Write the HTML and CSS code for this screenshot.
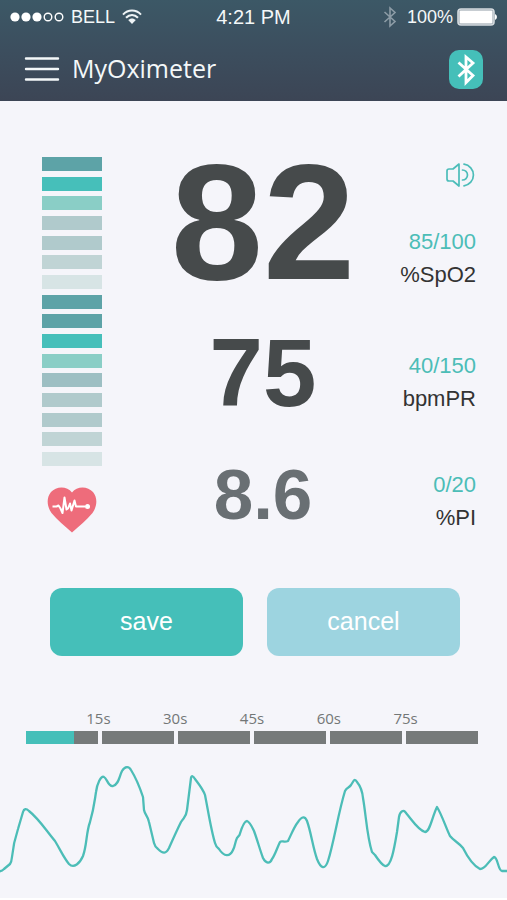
FILE: index.html
```
<!DOCTYPE html>
<html lang="en">
<head>
<meta charset="utf-8">
<meta name="viewport" content="width=device-width, initial-scale=1">
<title>MyOximeter</title>
<link rel="stylesheet" href="styles.css">
</head>
<body>
<header class="top">
  <div class="status">
    <div class="status-side">
      <svg class="signal" width="54" height="10" viewBox="0 0 54 10" aria-hidden="true">
        <g fill="#fff"><circle cx="5" cy="5" r="4.6"/><circle cx="16" cy="5" r="4.6"/><circle cx="27" cy="5" r="4.6"/></g>
        <g fill="none" stroke="#fff" stroke-width="1.4"><circle cx="38" cy="5" r="3.8"/><circle cx="49" cy="5" r="3.8"/></g>
      </svg>
      <span>BELL</span>
      <svg width="20" height="16" viewBox="0 0 20 16" aria-hidden="true">
        <g fill="none" stroke="#eef4f6" stroke-width="2"><path d="M1 5.6C6 .2 14 .2 19 5.600"/><path d="M4 8.800C7.500 5 12.500 5 16 8.800"/></g>
        <path d="M6.200 11.100C8.500 8.800 11.500 8.800 13.800 11.100L10 15Z" fill="#eef4f6"/>
      </svg>
    </div>
    <span class="clock">4:21 PM</span>
    <div class="status-side status-right">
      <svg class="bt-small" width="14" height="22" viewBox="0 0 14 22" fill="none" stroke="#8d9ca6" stroke-width="1.600" aria-hidden="true"><path d="M1.500 6 12 15.500 7 20V2l5 4.500L1.500 16"/></svg>
      <span>100%</span>
      <svg width="40" height="18" viewBox="0 0 40 18" aria-hidden="true">
        <rect x="1" y="1" width="36" height="16" rx="3" fill="#8e9ba4" stroke="#d5dbdf" stroke-width="1.600"/>
        <rect x="2.500" y="2.500" width="33" height="13" rx="1" fill="#fff"/>
        <path d="M38 6q2 1 2 3t-2 3z" fill="#fff"/>
      </svg>
    </div>
  </div>
  <div class="bar">
    <button class="icon-button" type="button" aria-label="Menu">
      <svg width="36" height="26" viewBox="0 0 36 26" stroke="#f4f8f9" stroke-width="2.400" stroke-linecap="round"><path d="M2 1.500H34M2 12H34M2 22.500H34"/></svg>
    </button>
    <h1>MyOximeter</h1>
    <button class="icon-button bluetooth" type="button" aria-label="Bluetooth">
      <svg width="34" height="39" viewBox="0 0 34 39" fill="none" stroke="#fff" stroke-width="2.800"><path d="M9.500 12.500 24 25.500 17 32.500V7l7 6L9.500 26.500"/></svg>
    </button>
  </div>
</header>
<main>
  <section class="monitor">
    <div class="gauge">
      <div class="meter" aria-hidden="true">
        <i class="t1"></i><i class="t2"></i><i class="t3"></i><i class="t5"></i><i class="t5"></i><i class="t6"></i><i class="t7"></i><i class="t1"></i>
        <i class="t1"></i><i class="t2"></i><i class="t3"></i><i class="t4"></i><i class="t5"></i><i class="t5"></i><i class="t6"></i><i class="t7"></i>
      </div>
      <svg class="heart" width="50" height="46" viewBox="0 0 50 46" aria-hidden="true">
        <path d="M25 5.500C20-1.500 9-1 4 5-1 11 0 20 4.500 26 10 33 18 39 25 45.500 32 39 40 33 45.500 26 50 20 51 11 46 5 41-1 30-1.500 25 5.500Z" fill="#ee6c7b"/>
        <path d="M5.500 19.500h4l2-1 2 3 2 4.500 2-15.500 2 12 1.500-1 2-5 1.500 7 3-10 1.500 6h9" fill="none" stroke="#fff" stroke-width="2" stroke-linejoin="round"/>
        <circle cx="40.500" cy="19.500" r="2.500" fill="#fff"/>
      </svg>
    </div>
    <div class="readings">
      <div class="reading">
        <strong class="value large">82</strong>
        <div class="side">
          <button class="icon-button" type="button" aria-label="Sound">
            <svg width="31" height="26" viewBox="0 0 31 26" fill="none" stroke="#4cbdb9" stroke-width="1.700" stroke-linejoin="round" stroke-linecap="round"><path d="M8 7H4Q2 7 2 9v8q0 2 2 2h4l6 5V2Z"/><path d="M17.500 8a5 5 0 0 1 0 10M19 2.200a10.900 10.900 0 0 1 0 21.600"/></svg>
          </button>
          <p class="legend"><span>85/100</span>%SpO2</p>
        </div>
      </div>
      <div class="reading">
        <strong class="value medium">75</strong>
        <p class="legend"><span>40/150</span>bpmPR</p>
      </div>
      <div class="reading">
        <strong class="value small">8.6</strong>
        <p class="legend"><span>0/20</span>%PI</p>
      </div>
    </div>
  </section>
  <div class="actions">
    <button class="save" type="button">save</button>
    <button class="cancel" type="button">cancel</button>
  </div>
  <section class="timeline">
    <div class="ticks"><span>15s</span><span>30s</span><span>45s</span><span>60s</span><span>75s</span></div>
    <div class="track" role="progressbar" aria-label="Recording" aria-valuemin="0" aria-valuemax="90" aria-valuenow="10">
      <i><b style="width:67%"></b></i><i></i><i></i><i></i><i></i><i></i>
    </div>
  </section>
  <svg class="wave" viewBox="0 0 507 132" aria-hidden="true">
    <path d="M-1 111.500Q2 111 4 109L10 104Q11.500 102 12 97C13 87 15 78 18 69L23 52Q24.500 47 29 51C39 59 45 69 55 81C61 91 64 98 69 104C74 109 80 103 83 96C87 85 86 73 90 62C94 48 94 45 96 32C97 24 101 15 104 17C107 18 108 27 113 26C119 24 119 17 122 11C125 6 129 6 131 10C136 18 140 28 143 37L144 50C145 55 148 56 149 62L154 83Q155 87 158 89C163 94 166 94 169 88C173 79 177 70 181 62C184 57 186 58 187 50L191 18Q192 14 195 19C198 23 203 29 205 35C208 50 211 70 215 83Q216 87 219 89C224 97 230 97 233 90C235 87 235 82 237 78L239.500 75C241 70 244 61 247 61C250 62 252 67 254 71C257 79 260 90 263 98C266 104 270 104 272 99C275 95 277 88 280 82C282 80 284 83 288 81C291 75 294 67 298 62C302 56 305 56 307 61C311 72 313 88 317 99C321 109 325 110 328 101C334 82 338 54 345 31C347 27 349 28 351 25L353.500 21Q355 18.500 357 22Q362 28 363 38C366 55 367 77 372 92L375 95C379 101 382 105 385 106C391 107 394 90 397 72L399 57C400 51 404 49 406 53C412 60 418 70 425 72C430 72 432 57 437 47C442 55 446 68 450 76C454 81 458 82 463 88C467 96 472 105 480 109C486 109 488 101 494 97C498 97 498 111 502 111H508" fill="none" stroke="#4cbdb7" stroke-width="2.300" stroke-linejoin="round"/>
  </svg>
</main>
</body>
</html>
```
FILE: styles.css
```
* { box-sizing: border-box; }
body {
  margin: 0;
  background: #fff;
  color: #333;
  font-family: "Liberation Sans", Arial, sans-serif;
}
h1, p { margin: 0; }
button { border: 0; padding: 0; font: inherit; cursor: pointer; }
svg { display: block; }
.icon-button { background: none; }

.top {
  padding: 5px 10px 0;
  color: #f4f8f9;
  background: linear-gradient(#3c5866, #3c4e5e 50%, #3c4555);
}
.status {
  display: grid;
  grid-template-columns: 1fr auto 1fr;
  align-items: center;
  height: 24px;
  font-size: 18px;
}
.status-side { display: flex; align-items: center; gap: 7px; }
.status-right { justify-content: flex-end; gap: 4px; }
.bt-small { margin-right: 6px; }
.clock { font-size: 20px; }
.bar {
  display: flex;
  align-items: center;
  gap: 12px;
  padding: 21px 14px 12px;
}
h1 { flex: 1; font: 25px/36px "Open Sans", "Noto Sans", sans-serif; padding-bottom: 3px; }
.bar .bluetooth { border-radius: 10px; background: #45bfb9; }

main { padding-bottom: 6px; background: #f5f5fa; }
.monitor { display: flex; padding: 51px 31px 0 42px; }
.gauge { display: flex; flex-direction: column; align-items: center; width: 60px; padding-top: 5px; }
.meter {
  display: flex;
  flex-direction: column;
  justify-content: space-between;
  width: 100%;
  height: 309px;
  margin-bottom: 21px;
}
.meter i { height: 14px; }
.t1 { background: #5da3a7; }
.t2 { background: #46bfba; }
.t3 { background: #8acec6; }
.t4 { background: #9dbfc3; }
.t5 { background: #b0cacc; }
.t6 { background: #c0d4d5; }
.t7 { background: #d7e4e5; }

.readings { flex: 1; padding-left: 24px; }
.reading { display: grid; grid-template-columns: 1fr 76px; align-items: end; }
.value { text-align: center; color: #464a4b; }
.large { font-size: 166px; line-height: 140px; }
.medium { font-size: 96px; line-height: 84px; }
.small { font-size: 71px; line-height: 78px; color: #696f73; }
.side {
  display: flex;
  flex-direction: column;
  justify-content: space-between;
  align-items: flex-end;
  align-self: stretch;
  padding: 10px 0 1px;
}
.legend { padding-top: 57px; text-align: right; font-size: 22px; line-height: 33px; }
.side .legend { padding-top: 0; }
.reading:last-child .legend { padding-top: 53px; }
.legend span { display: block; color: #4cbdb7; }

.actions { display: grid; grid-template-columns: 1fr 1fr; gap: 24px; padding: 54px 47px 0 50px; }
.actions button { height: 68px; border-radius: 12px; color: #fff; font-size: 25px; padding-bottom: 2px; }
.save { background: #45bfb9; }
.cancel { background: #9dd4e0; }

.timeline { padding: 53px 29px 0 26px; }
.ticks {
  display: grid;
  grid-template-columns: repeat(5, 1fr);
  padding: 0 34px 4px;
  text-align: center;
  color: #737777;
  font: 15px/18px "Open Sans", "Noto Sans", sans-serif;
}
.track { display: grid; grid-template-columns: repeat(6, 1fr); gap: 4px; }
.track i { height: 13px; background: #767a7a; }
.track b { display: block; height: 100%; background: #45bfb9; }
.wave { width: 100%; margin-top: 16px; }
```
